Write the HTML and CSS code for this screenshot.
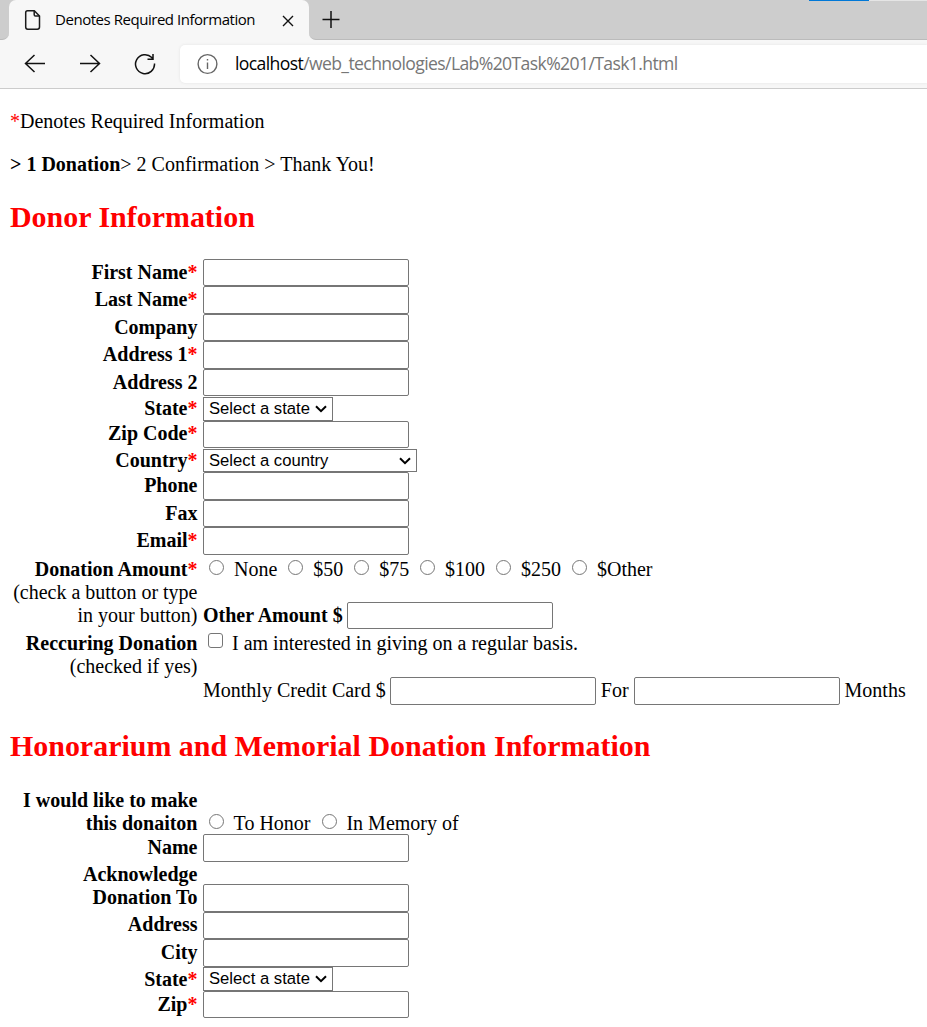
FILE: index.html
```html
<!DOCTYPE html>
<html lang="en">
<head>
<meta charset="utf-8">
<title>Denotes Required Information</title>
<link rel="stylesheet" href="styles.css">
</head>
<body>
<header class="browser">
  <div class="tabstrip">
    <div class="before-tab"></div>
    <div class="tab">
      <svg class="page-icon" width="18" height="22" viewBox="0 0 18 22" fill="none" stroke="#1b1b1b" stroke-width="1.5"><path d="M3.5 1.8H10.3L15.5 7V18Q15.500 20.200 13.300 20.200H3.700Q1.700 20.200 1.700 18V3.800Q1.700 1.800 3.500 1.800Z"/><path d="M10.200 2V5.800Q10.200 7.100 11.500 7.100H15.300"/></svg>
      <span class="tab-title">Denotes Required Information</span>
      <svg class="close" width="12" height="12" viewBox="0 0 12 12" stroke="#111" stroke-width="1.400"><path d="M1 1L11 11M11 1L1 11"/></svg>
    </div>
    <div class="after-tab">
      <svg width="18" height="18" viewBox="0 0 18 18" stroke="#111" stroke-width="1.500"><path d="M0.500 8.500H17.500M9 0V17"/></svg>
      <div class="window-edge"></div>
    </div>
  </div>
  <div class="toolbar">
    <svg class="back" width="22" height="20" viewBox="0 0 22 20" fill="none" stroke="#111" stroke-width="1.500"><path d="M21 9.500H1.500M10.500 1L1.500 9.500L10.500 18"/></svg>
    <svg class="forward" width="22" height="20" viewBox="0 0 22 20" fill="none" stroke="#111" stroke-width="1.500"><path d="M1 9.500H20.500M11.500 1L20.500 9.500L11.500 18"/></svg>
    <svg class="reload" width="22" height="22" viewBox="0 0 22 22" fill="none" stroke="#111" stroke-width="1.500"><path d="M20.500 10.500A9.500 9.500 0 1 1 17.800 4.500L19 6M19 1V6.200H13.500"/></svg>
    <div class="address">
      <svg width="22" height="22" viewBox="0 0 22 22" fill="none" stroke="#666" stroke-width="1.400"><circle cx="11.500" cy="11" r="9.400"/><path d="M11.500 9.500V16M11.500 6V7.600"/></svg>
      <span class="url"><b>localhost</b>/web_technologies/Lab%20Task%201/Task1.html</span>
    </div>
  </div>
</header>
<main>
  <p class="note"><i>*</i>Denotes Required Information</p>
  <p class="steps"><b>&gt; 1 Donation</b>&gt; 2 Confirmation &gt; Thank You!</p>
  <h1>Donor Information</h1>
  <form>
    <div class="row"><label>First Name<i>*</i></label><input type="text"></div>
    <div class="row tall"><label>Last Name<i>*</i></label><input type="text"></div>
    <div class="row"><label>Company</label><input type="text"></div>
    <div class="row tall"><label>Address 1<i>*</i></label><input type="text"></div>
    <div class="row"><label>Address 2</label><input type="text"></div>
    <div class="row pick state"><label>State<i>*</i></label><div class="select">Select a state<svg width="12" height="8" viewBox="0 0 12 8"><path d="M1 1.200L6 6.200L11 1.200"/></svg></div></div>
    <div class="row zip"><label>Zip Code<i>*</i></label><input type="text"></div>
    <div class="row pick country"><label>Country<i>*</i></label><div class="select wide">Select a country<svg width="12" height="8" viewBox="0 0 12 8"><path d="M1 1.200L6 6.200L11 1.200"/></svg></div></div>
    <div class="row tall"><label>Phone</label><input type="text"></div>
    <div class="row"><label>Fax</label><input type="text"></div>
    <div class="row tall"><label>Email<i>*</i></label><input type="text"></div>
    <div class="row amount">
      <label>Donation Amount<i>*</i><br><span>(check a button or type<br>in your button)</span></label>
      <div class="field">
        <div class="choices"><input type="radio"> None <input type="radio"> $50 <input type="radio"> $75 <input type="radio"> $100 <input type="radio"> $250 <input type="radio"> $Other</div>
        <div class="line"><b>Other Amount $</b><input type="text"></div>
      </div>
    </div>
    <div class="row recurring">
      <label>Reccuring Donation<br><span>(checked if yes)</span></label>
      <div class="choices"><input type="checkbox"> I am interested in giving on a regular basis.</div>
    </div>
    <div class="row tall monthly"><label></label><div class="line"><span>Monthly Credit Card $</span><input type="text"><span>For</span><input type="text"><span>Months</span></div></div>
    <h1 class="second">Honorarium and Memorial Donation Information</h1>
    <div class="row honor">
      <label>I would like to make<br>this donaiton</label>
      <div class="choices"><input type="radio"> To Honor <input type="radio"> In Memory of</div>
    </div>
    <div class="row tall"><label>Name</label><input type="text"></div>
    <div class="row acknowledge"><label>Acknowledge<br>Donation To</label><input type="text"></div>
    <div class="row zip"><label>Address</label><input type="text"></div>
    <div class="row tall"><label>City</label><input type="text"></div>
    <div class="row pick state snug"><label>State<i>*</i></label><div class="select">Select a state<svg width="12" height="8" viewBox="0 0 12 8"><path d="M1 1.200L6 6.200L11 1.200"/></svg></div></div>
    <div class="row"><label>Zip<i>*</i></label><input type="text"></div>
  </form>
</main>
</body>
</html>
```
FILE: styles.css
```css
* { box-sizing: border-box; }
html { overflow: hidden; }
body { margin: 0; height: 1027px; background: #fff; color: #000; font: 20px/23px "Liberation Serif", serif; white-space: nowrap; }
svg { flex: none; }
i { color: #f00; font-style: normal; }

.browser { height: 89px; background: #f7f7f7; border-bottom: 1px solid #ccc; font-family: "Open Sans", sans-serif; }
.tabstrip { display: flex; height: 40px; }
.before-tab { width: 9px; background: #cdcdcd; border-bottom-right-radius: 7px; border-bottom: 1px solid #bbb; }
.tab { width: 300px; display: flex; align-items: center; padding-left: 15px; border-radius: 7px 7px 0 0; background: #f7f7f7; box-shadow: 0 -7px 0 #cdcdcd; }
.tab-title { width: 228px; margin-left: 13px; padding-bottom: 2px; font-size: 15px; letter-spacing: -0.46px; }
.close { margin-left: -1px; margin-top: 1px; }
.after-tab { flex: 1; display: flex; justify-content: space-between; padding: 11px 0 0 13px; background: #cdcdcd; border-bottom-left-radius: 7px; border-bottom: 1px solid #bbb; }
.window-edge { width: 118px; height: 1px; margin-top: -11px; background: linear-gradient(90deg, #0078d7 60px, #e5e5e5 60px); }
.toolbar { display: flex; align-items: center; height: 47px; padding-left: 24px; }
.forward { margin-left: 33px; }
.reload { margin-left: 33px; }
.address { flex: 1; display: flex; align-items: center; height: 38px; margin-left: 24px; padding-left: 16px; border-radius: 5px 0 0 5px; background: #fff; box-shadow: 0 0 3px #e2e2e2; }
.url { margin-left: 17px; color: #767676; font-size: 17.6px; letter-spacing: -0.62px; }
.url b { color: #000; font-weight: 400; }

main { padding: 21px 10px 0; }
p { margin: 0; }
.steps { margin-top: 20px; }
h1 { margin: 24px 0 25px; color: #f00; font-size: 29.95px; line-height: 34px; }
h1.second { margin: 24px 0 25px; }
form { display: flex; flex-direction: column; }
.row { display: flex; gap: 5.5px; height: 27px; }
.tall { height: 28px; }
.row label { width: 187.5px; padding-top: 2px; text-align: right; font-weight: 700; }
label span { font-weight: 400; }
input { appearance: none; flex: none; margin: 0; border: 1px solid #767676; background: #fff; }
input[type="text"] { width: 206px; height: 100%; padding: 0; border-radius: 2px; }
.state { height: 25px; padding-top: 1px; }
.snug { height: 24px; padding-top: 0; }
.country { height: 24px; padding-top: 1px; }
.pick label { margin-top: -2px; }
.snug label { margin-top: -1px; }
.row.zip label { padding-top: 1px; }
.select { display: flex; align-items: center; justify-content: space-between; width: 130px; height: 24px; padding: 0 5px; border: 1px solid #767676; font: 16.667px/20px "Liberation Sans", sans-serif; }
.select.wide { width: 214px; height: 23px; }
.select svg { fill: none; stroke: #000; stroke-width: 2; }
.row.amount { height: 76px; padding-top: 2px; }
.row.amount label, .row.recurring label { padding-top: 1px; }
.field { display: flex; flex-direction: column; gap: 21px; }
.choices { height: 24px; padding-top: 1px; }
input[type="radio"] { width: 15px; height: 15px; margin: 0 4.75px 0 6.2px; border-radius: 50%; vertical-align: 1px; }
input[type="checkbox"] { width: 15px; height: 15px; margin: 0 4px 0 5px; border-radius: 3px; vertical-align: 2px; }
.line { display: flex; gap: 5px; height: 28px; line-height: 27px; }
.line > :first-child { margin-right: -1px; }
.amount .line { height: 27px; }
.recurring { height: 46px; }
.honor { height: 46px; }
.row.honor label { padding-top: 1px; }
.honor .choices { margin-top: 23px; }
.acknowledge { height: 50px; }
.row.acknowledge label { padding-top: 1px; }
.acknowledge input[type="text"] { height: 28px; margin-top: 22px; }
```
